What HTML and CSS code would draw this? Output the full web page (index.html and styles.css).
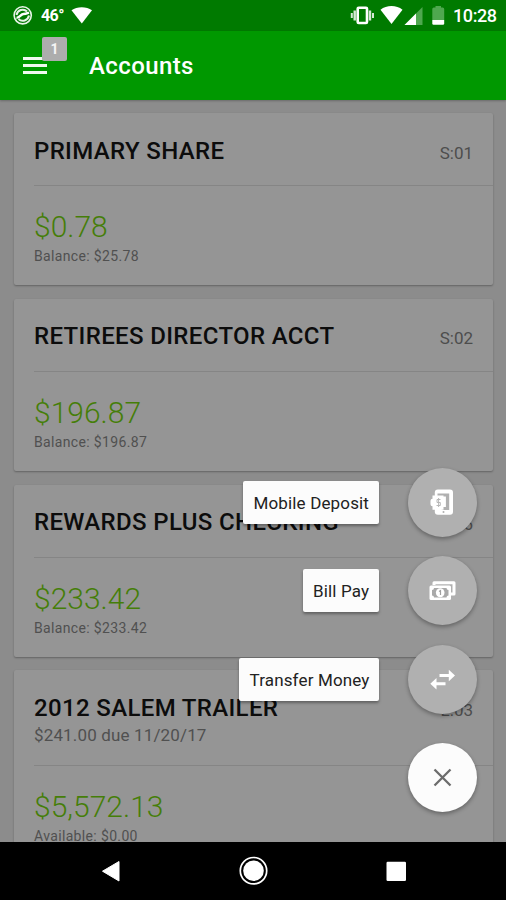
FILE: index.html
```html
<!DOCTYPE html>
<html lang="en">
<head>
<meta charset="utf-8">
<title>Accounts</title>
<link rel="stylesheet" href="styles.css">
</head>
<body>
<div class="phone">
  <div class="status">
    <svg class="s-left" width="100" height="30" viewBox="0 0 100 30">
      <circle cx="22.700" cy="15.300" r="8.600" fill="none" stroke="#e8f5e8" stroke-width="1.600"/>
      <path d="M16.500 15c1-5 7-7 10.500-3.500M29 15.500c-1 5-7 7-10.500 3.500" fill="none" stroke="#e8f5e8" stroke-width="2"/>
      <path d="M16.500 17.500c3 1 4-3.500 7-3.500 2 0 3-.5 5.500-1.500" fill="none" stroke="#fff" stroke-width="2.400"/>
      <path d="M71.500 10.200c5.500-4 15-4 20.500 0L81.800 23.500z" fill="#fff"/>
    </svg>
    <span class="temp">46°</span>
    <svg class="s-right" width="100" height="30" viewBox="347 0 100 30">
      <rect x="357.700" y="7.700" width="9.300" height="15.300" rx="1" fill="none" stroke="#fff" stroke-width="2.600"/>
      <path d="M354.700 10.500v10M370 10.500v10" stroke="#d5ead5" stroke-width="2.400"/>
      <path d="M351.800 13v5M373 13v5" stroke="#d5ead5" stroke-width="2"/>
      <path d="M380.500 9.800c6-5 16-5 22 0L391.500 24z" fill="#fff"/>
      <path d="M422.500 7v18H404.500z" fill="#4fa84f"/>
      <path d="M416 13.500V25h-11.500z" fill="#fff"/>
      <path d="M432.300 20V9q0-1.500 1.500-1.500h1.700V6h5.500v1.500h1.700q1.500 0 1.500 1.500v11z" fill="#4fa84f"/>
      <path d="M432.300 20h11.900v3.500q0 1.200-1.200 1.200h-9.500q-1.200 0-1.200-1.200z" fill="#fff"/>
    </svg>
    <span class="clock">10:28</span>
  </div>
  <header class="bar">
    <div class="burger"><i></i><i></i><i></i><b class="badge">1</b></div>
    <h1>Accounts</h1>
  </header>
  <main class="list">
    <section class="card">
      <div class="head"><h2>PRIMARY SHARE</h2><span class="code">S:01</span></div>
      <div class="body"><div class="amount">$0.78</div><div class="balance">Balance: $25.78</div></div>
    </section>
    <section class="card">
      <div class="head"><h2>RETIREES DIRECTOR ACCT</h2><span class="code">S:02</span></div>
      <div class="body"><div class="amount">$196.87</div><div class="balance">Balance: $196.87</div></div>
    </section>
    <section class="card">
      <div class="head"><h2>REWARDS PLUS CHECKING</h2><span class="code">S:06</span></div>
      <div class="body"><div class="amount">$233.42</div><div class="balance">Balance: $233.42</div></div>
    </section>
    <section class="card loan">
      <div class="head"><div><h2>2012 SALEM TRAILER</h2><div class="due">$241.00 due 11/20/17</div></div><span class="code">L:03</span></div>
      <div class="body"><div class="amount">$5,572.13</div><div class="balance">Available: $0.00</div></div>
    </section>
  </main>
  <div class="menu">
    <div class="action"><span class="label l1">Mobile Deposit</span>
      <div class="fab"><svg width="69" height="69" viewBox="0 0 69 69">
        <rect x="26.800" y="21.500" width="18.200" height="25.300" rx="3" fill="#fff"/>
        <path d="M29.500 25.500h11.700V42h-7.500v-3h4.200V28.500h-8.400z" fill="#b0b0b0"/>
        <path d="M24.500 27.500h11v14.200h-11v-3.500a2 2 0 0 1-2-2v-3.500a2 2 0 0 1 2-2z" fill="#fff"/>
        <path d="M32.500 31.500h-3.500v3h3.300v3h-3.800M30.600 30v9" fill="none" stroke="#b8b8b8" stroke-width="1"/>
        <circle cx="35.500" cy="44" r="1" fill="#b0b0b0"/>
      </svg></div></div>
    <div class="action"><span class="label l2">Bill Pay</span>
      <div class="fab"><svg width="69" height="69" viewBox="0 0 69 69">
        <path d="M26 29v-2.200h20V38h-3" fill="none" stroke="#fff" stroke-width="3" stroke-linejoin="round"/>
        <rect x="21.500" y="29.500" width="21.500" height="14.500" rx="1.500" fill="#fff"/>
        <path d="M26 32h12.500q0 2 2 2v5.500q-2 0-2 2H26q0-2-2-2V34q2 0 2-2z" fill="#a9a9a9"/>
        <ellipse cx="32.200" cy="36.800" rx="4.300" ry="4.500" fill="#fff"/>
        <path d="M31 35.500l1.500-1v4.500" fill="none" stroke="#a0a0a0" stroke-width="1.200"/>
      </svg></div></div>
    <div class="action"><span class="label l3">Transfer Money</span>
      <div class="fab"><svg width="69" height="69" viewBox="0 0 69 69">
        <path d="M31.500 30.500H43M26 38.700h11.500" fill="none" stroke="#fff" stroke-width="3"/>
        <path d="M40.800 24.800l6.200 5.700-6.200 5.700zM28.500 33l-6.200 5.700 6.200 5.700z" fill="#fff"/>
      </svg></div></div>
    <div class="action close"><div class="fab white"><svg width="69" height="69" viewBox="0 0 69 69">
        <path d="M26.500 26.500l16 16M42.500 26.500l-16 16" fill="none" stroke="#6c6c6c" stroke-width="2.300"/>
      </svg></div></div>
  </div>
  <nav class="nav">
    <svg width="506" height="58" viewBox="0 842 506 58">
      <path d="M102.500 871.200L119 861.500v19.500z" fill="#fff" stroke="#fff" stroke-width="1" stroke-linejoin="round"/>
      <circle cx="253.500" cy="870.700" r="13.200" fill="none" stroke="#fff" stroke-width="1.700"/>
      <circle cx="253.500" cy="870.700" r="10.300" fill="#fff"/>
      <rect x="386.500" y="861.700" width="19.500" height="19.300" rx="1.200" fill="#fff"/>
    </svg>
  </nav>
</div>
</body>
</html>
```

FILE: styles.css
```css
* { box-sizing: border-box; }
body { margin: 0; font-family: Roboto, "Liberation Sans", sans-serif; }
.phone { position: relative; width: 506px; height: 900px; overflow: hidden; display: flex; flex-direction: column; background: #8c8c8c; }
.status { position: relative; flex: 0 0 30px; background: #007a00; color: #fff; display: flex; justify-content: space-between; font-weight: 500; line-height: 31px; }
.s-left { width: 100px; }
.temp { position: absolute; left: 41px; top: 0; font-size: 16px; letter-spacing: -0.6px; font-weight: 700; }
.s-right { margin-left: auto; }
.clock { width: 59px; padding-left: 6px; font-size: 18px; letter-spacing: -0.4px; white-space: nowrap; }
.bar { flex: 0 0 69px; background: #009800; display: flex; align-items: center; padding-left: 23px; box-shadow: 0 1px 2px rgba(0,0,0,.25); z-index: 1; }
.burger { position: relative; width: 24px; margin-top: -1px; display: flex; flex-direction: column; gap: 4px; }
.burger i { height: 3px; background: #effaef; }
.badge { position: absolute; left: 19px; top: -20px; width: 25px; height: 24px; border-radius: 2px; background: #adadad; color: #f5f5f5; font-size: 14px; line-height: 25px; text-align: center; }
.bar h1 { margin: 1px 0 0 42px; color: #fff; font-size: 24px; font-weight: 500; line-height: 30px; letter-spacing: 0.4px; }
.list { flex: 1; min-height: 0; overflow: hidden; padding: 13.300px 13px 0 14px; display: flex; flex-direction: column; gap: 13.700px; }
.card { flex: 0 0 172px; background: #959595; border-radius: 2px; box-shadow: 0 1px 2px rgba(0,0,0,.3); padding-left: 20px; }
.head { height: 73px; display: flex; justify-content: space-between; padding: 22.500px 20px 0 0; border-bottom: 1.500px solid #858585; }
.head h2 { margin: 0; font-size: 24px; font-weight: 500; line-height: 30px; color: #0c0c0c; letter-spacing: 0.350px; white-space: nowrap; }
.code { margin-top: 2px; font-size: 17px; line-height: 30px; color: #4d4d4d; }
.amount { padding-top: 23px; font-size: 30px; font-weight: 300; line-height: 36px; color: #457e08; }
.balance { font-size: 14px; line-height: 22px; color: #505050; letter-spacing: 0.350px; }
.loan { flex-basis: 196px; }
.loan .head { height: 96px; }
.due { font-size: 17px; line-height: 24px; color: #505050; letter-spacing: 0.150px; }
.menu { position: absolute; right: 29px; top: 467.500px; display: flex; flex-direction: column; gap: 19.500px; align-items: flex-end; }
.action { display: flex; align-items: center; gap: 29px; }
.close { margin-top: 10px; }
.fab { width: 69px; height: 69px; border-radius: 50%; background: #b0b0b0; box-shadow: 0 2px 4px rgba(0,0,0,.33); }
.fab svg { display: block; }
.white { background: #fcfcfc; }
.label { height: 43px; padding: 0 10.500px; border-radius: 2px; background: #fcfcfc; box-shadow: 0 2px 3px rgba(0,0,0,.35); color: #222; font-size: 17px; letter-spacing: 0.150px; line-height: 45px; white-space: nowrap; }
.l1 { width: 136px; }
.l2 { width: 76.500px; }
.l3 { width: 140px; }
.nav { flex: 0 0 58px; background: #000; }
.nav svg { display: block; }
```
